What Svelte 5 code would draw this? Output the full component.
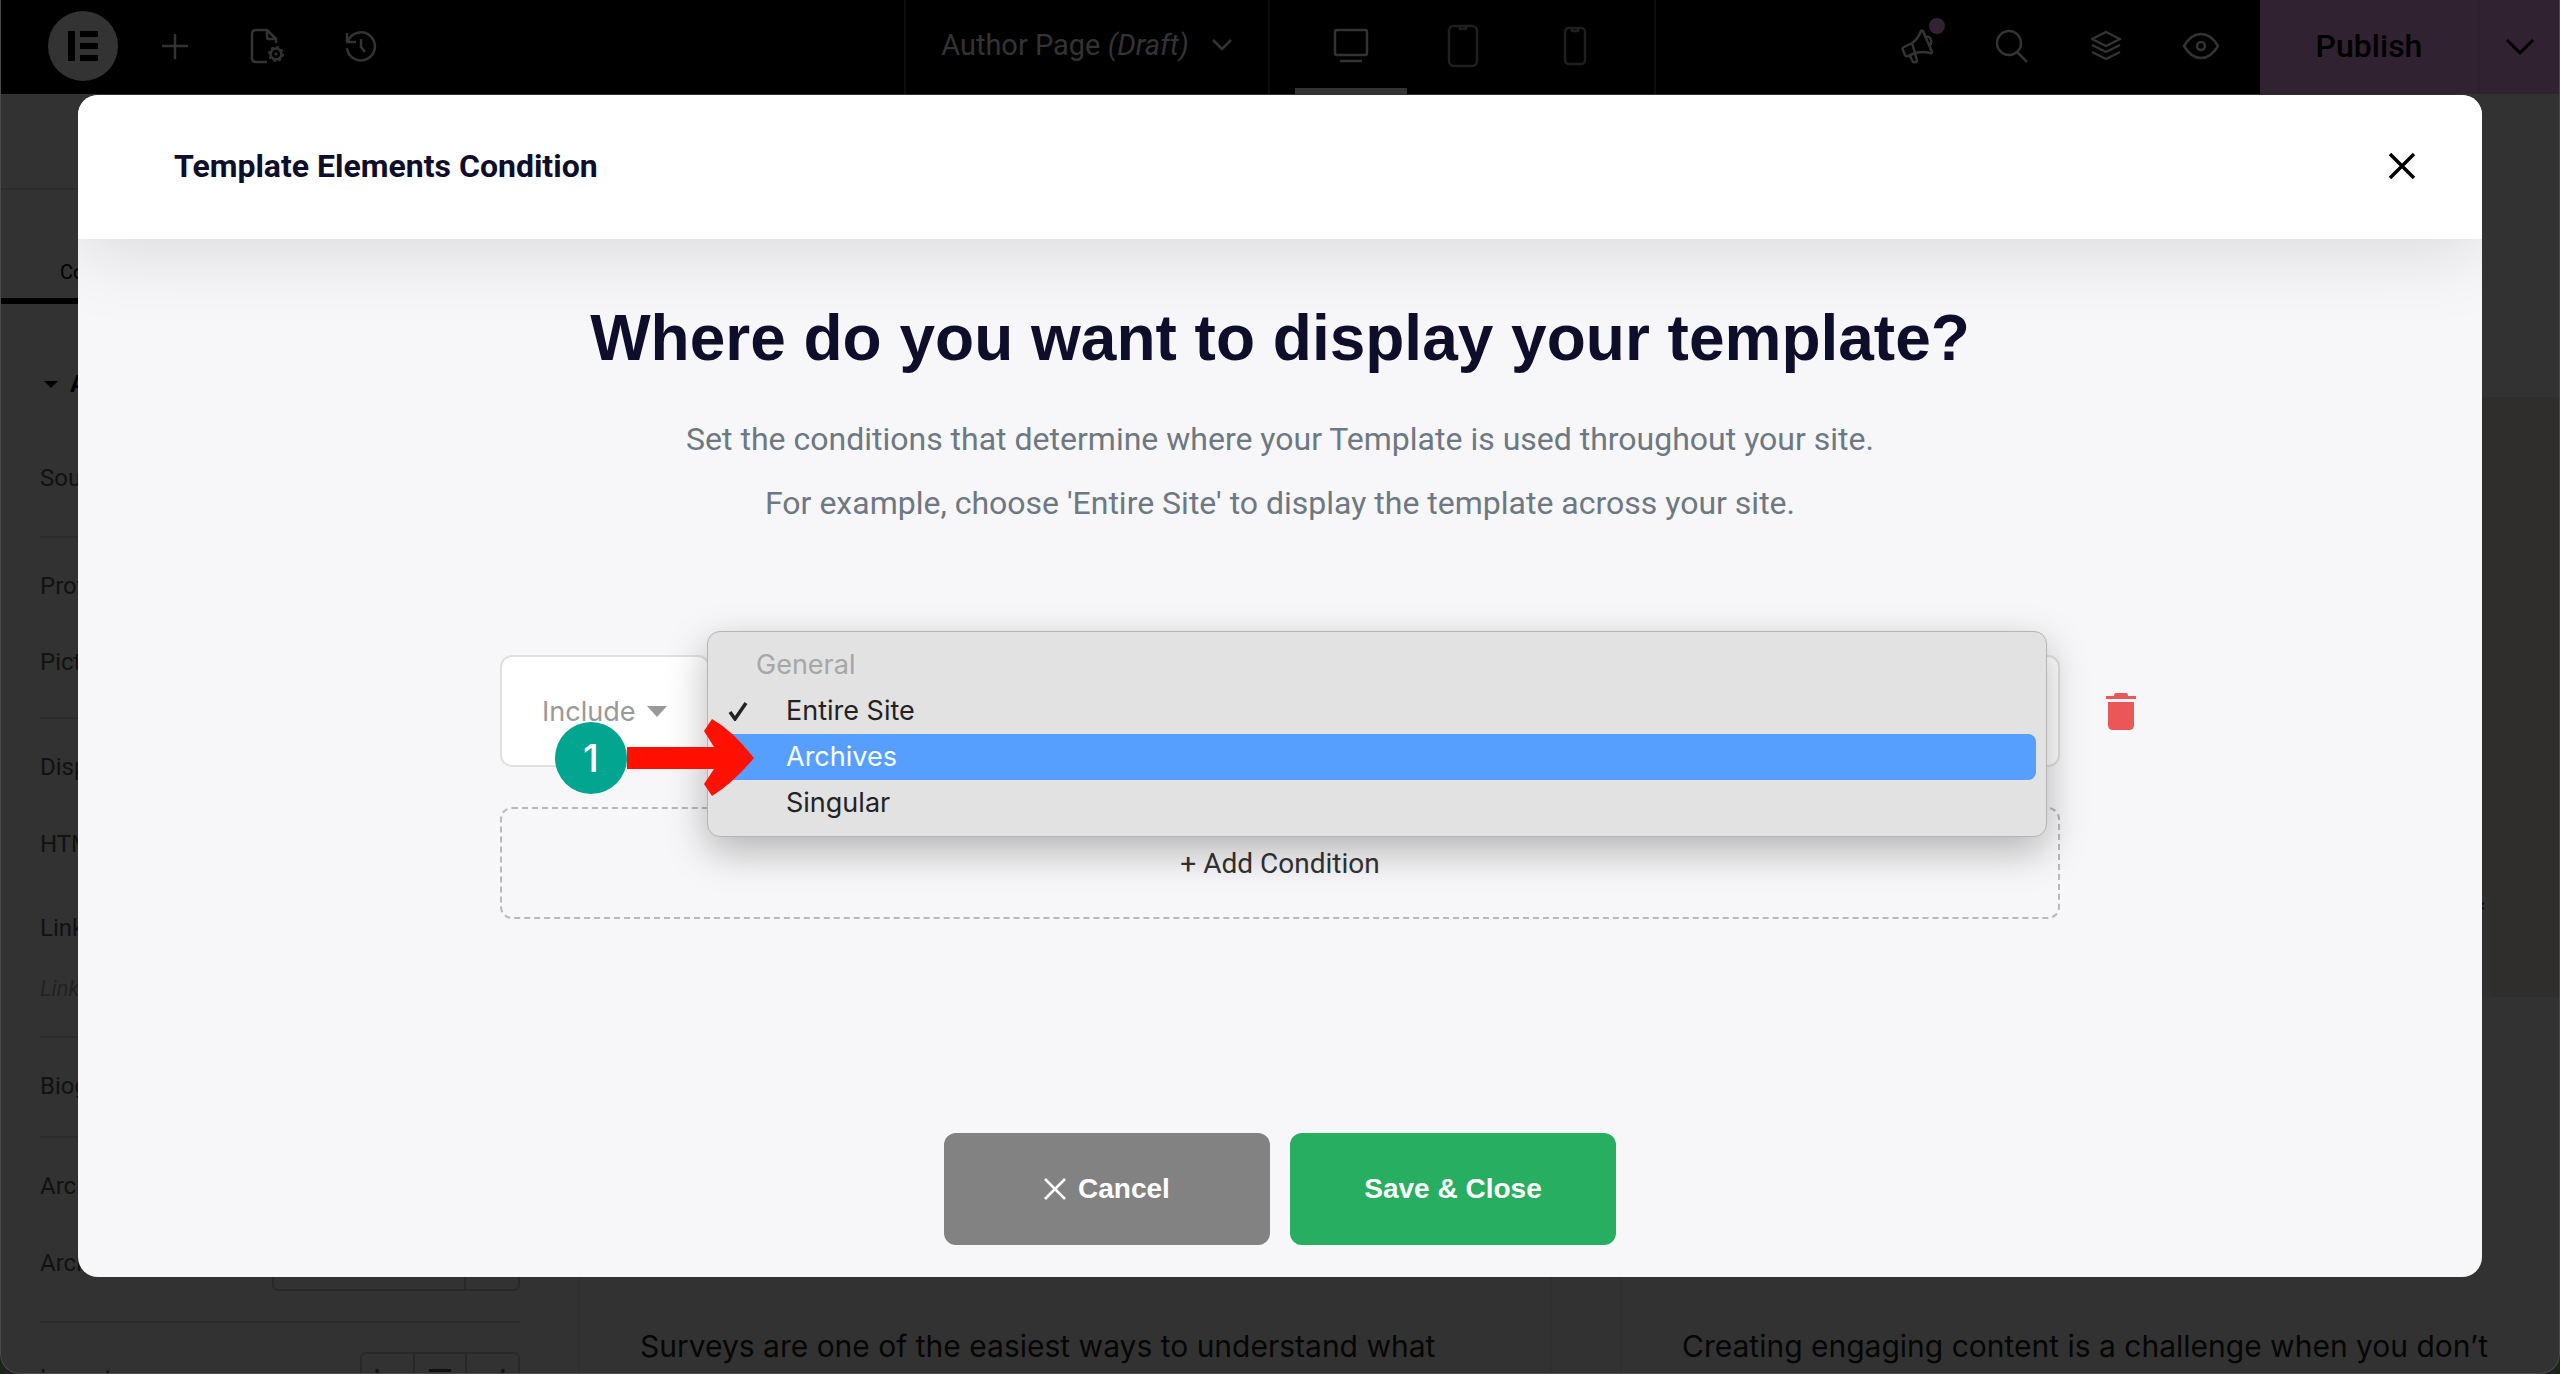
<script lang="ts">
  const options = [
    { label: 'Entire Site', checked: true, active: false },
    { label: 'Archives', checked: false, active: true },
    { label: 'Singular', checked: false, active: false }
  ];
  const groups = [
    [{ t: 'Source', h: 72 }],
    [{ t: 'Profile Picture', h: 76 }, { t: 'Picture Size', h: 69 }],
    [{ t: 'Display Name', h: 77 }, { t: 'HTML Tag', h: 84 }, { t: 'Link', h: 61 }, { t: 'Link for the Author Name and Image', h: 61, note: true }],
    [{ t: 'Biography', h: 64 }],
    [{ t: 'Archive Button', h: 77 }, { t: 'Archive Text', h: 72, box: true }]
  ];
  let mode = $state('Include');
</script>

<div class="page">
  <header class="bar">
    <div class="left">
      <button class="logo" aria-label="Menu"><svg width="32" height="30" viewBox="0 0 32 30"><path d="M1 0h7v30H1zM13 0h18v6H13zM13 12h18v6H13zM13 24h18v6H13z" fill="#000" /></svg></button>
      <button class="ic" aria-label="Add element"><svg width="36" height="36" viewBox="0 0 36 36"><path d="M18 6v25M5 18h26" /></svg></button>
      <button class="ic" aria-label="Site settings"><svg width="36" height="36" viewBox="0 0 36 36"><path d="M17 34H6q-4 0-4-4V6q0-4 4-4h11l9 9v4M17 2v7q0 2 2 2h7" /><circle cx="26" cy="26" r="5.500" /><circle cx="26" cy="26" r="7" stroke-width="2" stroke-dasharray="2.750 2.750" /><circle cx="26" cy="26" r="1.500" fill="#333" stroke="none" /></svg></button>
      <button class="ic" aria-label="History"><svg width="36" height="36" viewBox="0 0 36 36"><path d="M4 5v9h9M5 13A14 14 0 1 1 4 20M18 11v8l4 5" /></svg></button>
    </div>
    <button class="doc"><span>Author Page <i>(Draft)</i></span><svg width="22" height="14" viewBox="0 0 22 14"><path d="M2 2l9 9 9-9" /></svg></button>
    <div class="devices">
      <button class="on" aria-label="Desktop"><svg width="36" height="36" viewBox="0 0 36 36"><rect x="2" y="2" width="32" height="25" rx="2" /><path d="M7 33h22" /></svg></button>
      <button aria-label="Tablet"><svg width="32" height="44" viewBox="0 0 32 44"><rect x="2" y="2" width="28" height="40" rx="5" /><path d="M13 3v2h6V3" /></svg></button>
      <button aria-label="Mobile"><svg width="24" height="40" viewBox="0 0 24 40"><rect x="2" y="2" width="20" height="36" rx="4" /><path d="M9 3v2h6V3" /></svg></button>
    </div>
    <div class="right">
      <button class="ic" aria-label="What's new"><svg width="36" height="36" viewBox="0 0 36 36"><path d="M12 15L4 19Q2 20 3 22L5 27Q6 29 8 28L15 25zM12 15Q18 11 21 3 22 2 23 3L32 24Q32 26 30 25 23 23 15 25M10 28l3 6q3 1 4-1l-2-8M26 9q4-1 5 3t-2 6" /></svg><span class="dot"></span></button>
      <button class="ic" aria-label="Finder"><svg width="36" height="36" viewBox="0 0 36 36"><circle cx="15" cy="15" r="12" /><path d="M23 24l10 10" /></svg></button>
      <button class="ic" aria-label="Structure"><svg width="36" height="36" viewBox="0 0 36 36"><path d="M18 4l14 7-14 7-14-7zM4 17l14 7 14-7M4 24l14 7 14-7" /></svg></button>
      <button class="ic" aria-label="Preview"><svg width="38" height="36" viewBox="0 0 38 36"><path d="M2 18Q9 6 19 6t17 12Q29 30 19 30T2 18z" /><circle cx="19" cy="18" r="4" /></svg></button>
    </div>
    <div class="publish">
      <button class="pub">Publish</button>
      <button class="more" aria-label="Save options"><svg width="30" height="18" viewBox="0 0 30 18"><path d="M2 2l13 13L28 2" /></svg></button>
    </div>
  </header>

  <div class="work">
    <aside>
      <div class="panelhead"></div>
      <nav class="tabs"><button>Content</button></nav>
      <h3><svg width="14" height="7" viewBox="0 0 14 7"><path d="M0 0h14L7 7z" /></svg>Author Box</h3>
      {#each groups as g}
        <section>
          {#each g as r}
            <div class="row" class:note={r.note} style:height="{r.h}px">
              <span>{r.t}</span>
              {#if r.box}<div class="num"><span></span></div>{/if}
            </div>
          {/each}
        </section>
      {/each}
      <div class="layout">
        <span>Layout</span>
        <div class="seg">
          <button aria-label="Left"><svg width="24" height="16" viewBox="0 0 24 16"><path d="M2 0v16" /></svg></button>
          <button aria-label="Above"><svg width="24" height="16" viewBox="0 0 24 16"><path d="M1 1.500h22M12 6v10" /></svg></button>
          <button aria-label="Right"><svg width="24" height="16" viewBox="0 0 24 16"><path d="M22 0v16" /></svg></button>
        </div>
      </div>
    </aside>
    <main>
      <div class="hero"><div class="share"><svg width="8" height="8" viewBox="0 0 8 8"><path d="M7 1L1 4l6 3" /></svg></div></div>
      <div class="cards">
        <article><p>Surveys are one of the easiest ways to understand what</p></article>
        <article><p>Creating engaging content is a challenge when you don’t</p></article>
      </div>
    </main>
  </div>

  <div class="modal" role="dialog" aria-labelledby="dlg">
    <div class="mhead">
      <h2 id="dlg">Template Elements Condition</h2>
      <button aria-label="Close"><svg width="28" height="28" viewBox="0 0 28 28"><path d="M2 2l24 24M26 2L2 26" /></svg></button>
    </div>
    <div class="mbody">
      <h1>Where do you want to display your template?</h1>
      <p class="lead">Set the conditions that determine where your Template is used throughout your site.<br />For example, choose 'Entire Site' to display the template across your site.</p>
      <div class="conds">
        <div class="cond">
          <div class="inc">
            <select aria-label="Rule type" bind:value={mode}><option>Include</option><option>Exclude</option></select>
            <svg width="20" height="11" viewBox="0 0 20 11"><path d="M0 0h20L10 11z" fill="#999" /></svg>
          </div>
          <div class="field"></div>
          <button class="trash" aria-label="Remove condition"><svg width="30" height="37" viewBox="0 0 30 37"><path d="M8 3q0-3 2-3h10q2 0 2 3h8v3H0V3zM2 9h26v23q0 5-5 5H7q-5 0-5-5z" fill="#eb5757" /></svg></button>
          <div class="menu" role="listbox" aria-label="Location">
            <div class="grp">General</div>
            {#each options as o}
              <button role="option" aria-selected={o.checked} class:active={o.active}>
                <span class="chk">{#if o.checked}<svg width="20" height="20" viewBox="0 0 20 20"><path d="M2 11l5 7L18 2" /></svg>{/if}</span>{o.label}
              </button>
            {/each}
          </div>
          <div class="step"><b>1</b><svg width="128" height="78" viewBox="0 0 128 78"><path d="M0 28H87L77 12 85 0Q106 12 127 39 106 64 85 77L77 65 87 50H0z" fill="#ff1000" /></svg></div>
        </div>
        <button class="add">+ Add Condition</button>
      </div>
      <div class="acts">
        <button class="cancel"><svg width="22" height="22" viewBox="0 0 22 22"><path d="M1 1l20 20M21 1L1 21" /></svg>Cancel</button>
        <button class="save">Save &amp; Close</button>
      </div>
    </div>
  </div>
</div>

<style>
  :global(body) { background: #1b2619; }
  * { box-sizing: border-box; }
  .page { position: relative; height: 100vh; min-height: 1320px; overflow: hidden; background: #323232; border-radius: 0 0 20px 20px; font-family: Roboto, "Liberation Sans", sans-serif; display: flex; flex-direction: column; }
  .page::after { content: ""; position: absolute; inset: 0; border: 1px solid #4a4a4a; border-top: 0; border-radius: 0 0 20px 20px; pointer-events: none; }
  button { border: 0; background: none; padding: 0; margin: 0; font: inherit; color: inherit; display: flex; align-items: center; justify-content: center; }
  h1, h2, h3, p { margin: 0; }
  svg { display: block; flex: none; fill: none; }
  .bar { height: 94px; flex: none; background: #000; display: grid; grid-template-columns: 1fr 366px 386px 604px 300px; }
  .bar svg { stroke: #333; stroke-width: 2.5; stroke-linejoin: round; }
  .left, .right { display: flex; align-items: center; padding-bottom: 2px; }
  .left { padding-left: 48px; gap: 57px; }
  .left .logo { width: 70px; height: 70px; border-radius: 50%; background: #333; margin-right: -18px; }
  .bar .logo svg { stroke: none; }
  .doc { border: solid #0d0d0d; border-width: 0 2px; gap: 22px; font-size: 29px; color: #333; padding-bottom: 4px; }
  .devices { display: flex; padding-left: 25px; border-right: 2px solid #0d0d0d; }
  .devices button { width: 112px; border-bottom: 6px solid transparent; padding-top: 4px; }
  .devices button.on { border-color: #333; }
  .devices button:not(.on) svg { stroke: #1f1f1f; }
  .right { justify-content: flex-end; gap: 58px; padding-right: 40px; }
  .right .ic { position: relative; }
  .dot { position: absolute; width: 16px; height: 16px; right: -9px; top: -10px; border-radius: 50%; background: #302230; }
  .publish { display: flex; background: #302230; color: #000; font-size: 32px; font-weight: 500; }
  .pub { flex: 1; border-right: 2px solid #2b202b; padding-bottom: 2px; }
  .more { width: 80px; }
  .publish svg { stroke: #000; stroke-width: 3; }
  .work { flex: 1; display: flex; min-height: 0; }
  aside { width: 560px; flex: none; padding: 0 40px; color: #111; font-size: 24px; line-height: 28px; }
  .panelhead { height: 96px; border-bottom: 2px solid #2d2d2d; margin: 0 -40px; }
  .tabs { width: 280px; height: 114px; margin: 0 -40px; padding: 68px 0 0 60px; border-bottom: 6px solid #000; font-size: 20px; color: #000; display: flex; align-items: flex-start; }
  h3 { height: 126px; display: flex; align-items: center; gap: 12px; padding: 34px 4px 0; font-size: 24px; color: #000; }
  h3 svg { fill: #000; }
  section { border-bottom: 2px solid #2c2c2c; padding-top: 34px; }
  .row { display: flex; align-items: flex-start; justify-content: space-between; white-space: nowrap; }
  .note { font-style: italic; font-size: 22px; color: #222; }
  .num { width: 248px; height: 56px; margin-top: -14px; border: 2px solid #282828; border-radius: 6px; display: flex; justify-content: flex-end; }
  .num span { width: 54px; border-left: 2px solid #282828; }
  .layout { display: flex; justify-content: space-between; padding-top: 29px; }
  .layout span { padding-top: 12px; }
  .seg { display: flex; border: 2px solid #282828; border-radius: 6px; width: 160px; height: 60px; }
  .seg button { flex: 1; align-items: flex-start; padding-top: 15px; }
  .seg button + button { border-left: 2px solid #282828; }
  .seg svg { stroke: #111; stroke-width: 3; }
  main { flex: 1; display: flex; flex-direction: column; padding-top: 303px; min-width: 0; }
  .hero { height: 600px; flex: none; background: #2f2e2c; display: flex; justify-content: flex-end; align-items: flex-end; padding-right: 68px; }
  .share { width: 60px; height: 101px; background: #303030; border-radius: 0 6px 0 0; display: flex; justify-content: flex-end; padding: 6px 7px; }
  .share svg { stroke: #111; stroke-width: 2; }
  .cards { flex: 1; display: flex; gap: 68px; padding-left: 18px; margin-right: -34px; }
  article { flex: 1; padding: 329px 0 0 60px; font: 30px/40px Inter, sans-serif; color: #060606; border: solid #2f2f2f; border-width: 0 2px; white-space: nowrap; }
  .modal { position: absolute; inset: 95px 78px 97px; border-radius: 20px; background: #f7f7f9; display: flex; flex-direction: column; overflow: hidden; }
  .mhead { height: 144px; flex: none; background: #fff; display: flex; align-items: center; justify-content: space-between; padding: 0 66px 2px 96px; box-shadow: 0 10px 80px rgba(0, 0, 0, .13); }
  .mhead svg { stroke: #000; stroke-width: 3.5; }
  h2 { font-size: 32px; font-weight: 700; color: #0e0e2a; }
  h1 { font: 700 64px/76px "Liberation Sans", sans-serif; color: #0e0e2a; white-space: nowrap; }
  .mbody { flex: 1; display: flex; flex-direction: column; align-items: center; padding: 61px 422px 32px; }
  .lead { font-size: 32px; line-height: 64px; color: #6d7882; text-align: center; margin-top: 31px; }
  .conds { width: 100%; margin-top: 120px; }
  .cond { position: relative; display: flex; height: 112px; }
  .inc { width: 210px; border: 2px solid #e0e0e2; border-radius: 12px; background: #fff; display: flex; align-items: center; padding-left: 40px; gap: 12px; }
  select { appearance: none; field-sizing: content; border: 0; background: none; padding: 0; font: 27px Inter, sans-serif; color: #999; }
  .field { flex: 1; border: 2px solid #e0e0e2; border-left: 0; border-radius: 0 12px 12px 0; background: #fff; }
  .trash { position: absolute; left: 100%; top: 0; height: 100%; margin-left: 46px; }
  .menu { position: absolute; left: 207px; right: 13px; top: -24px; padding: 10px; background: #e2e2e2; border: 1px solid #b4b4b6; border-radius: 13px; box-shadow: 0 14px 40px rgba(0, 0, 0, .28); font: 27px/46px Inter, sans-serif; color: #222; }
  .grp { padding-left: 38px; color: #a6a6a6; }
  .menu button { width: 100%; height: 46px; justify-content: flex-start; border-radius: 8px; }
  .menu .active { background: #569fff; color: #fff; }
  .chk { width: 68px; padding-left: 10px; }
  .chk svg { stroke: #222; stroke-width: 3.5; }
  .step { position: absolute; left: 55px; top: 64px; display: flex; align-items: center; }
  .step b { width: 72px; height: 72px; border-radius: 50%; background: #02a590; color: #fff; display: grid; place-items: center; font: 500 38px Inter, sans-serif; }
  .add { width: 100%; height: 112px; margin-top: 40px; border: 2px dashed #b9b9bb; border-radius: 12px; font-size: 28px; color: #333; }
  .acts { display: flex; gap: 20px; margin-top: auto; font: 700 28px "Liberation Sans", sans-serif; color: #fff; }
  .acts button { width: 326px; height: 112px; border-radius: 12px; gap: 12px; }
  .cancel { background: #828282; }
  .cancel svg { stroke: #fff; stroke-width: 2.5; }
  .save { background: #27ae60; }
</style>
